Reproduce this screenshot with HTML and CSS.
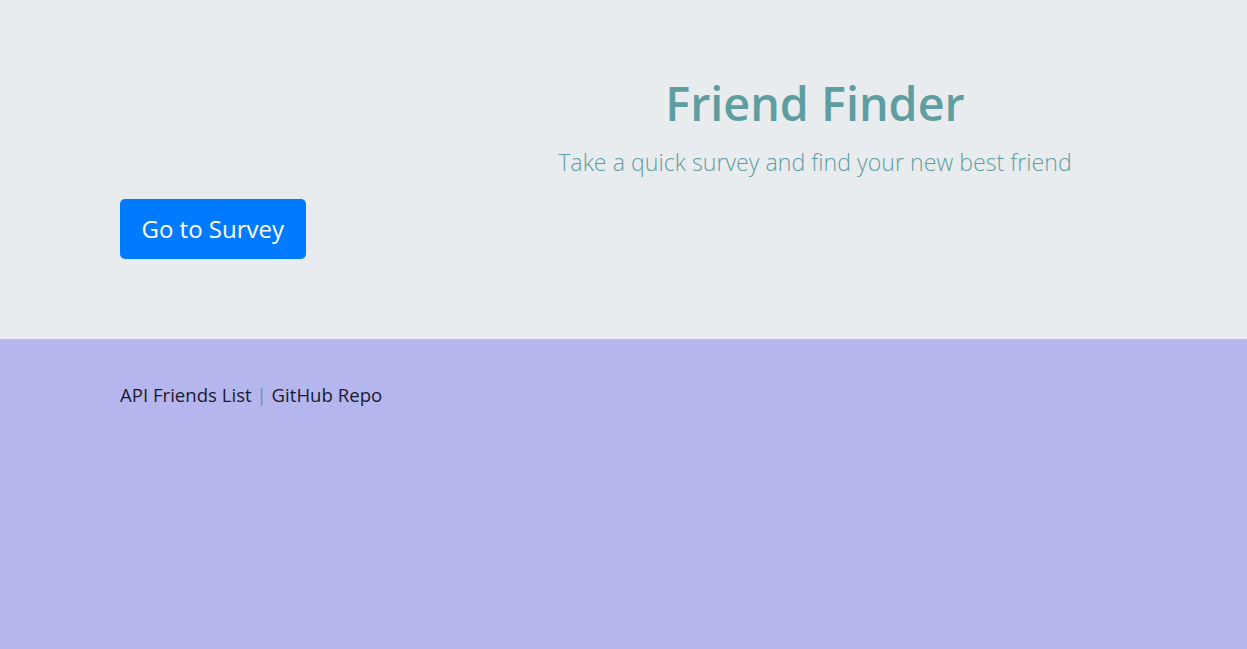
FILE: index.html
```html
<!DOCTYPE html>
<html>
<head>
<meta charset="utf-8">
<link rel="stylesheet" href="styles.css">
</head>
<body>
<header class="jumbotron">
  <div class="hero">
    <h1 class="title">Friend Finder</h1>
    <p class="lead">Take a quick survey and find your new best friend</p>
  </div>
  <a class="btn" href="#">Go to Survey</a>
</header>
<footer class="footer">
  <a href="#" class="link">API Friends List</a> <span class="sep">|</span> <a href="#" class="link">GitHub Repo</a>
</footer>
</body>
</html>
```
FILE: styles.css
```css
html, body {
  margin: 0;
  padding: 0;
  height: 100%;
}
body {
  font-family: "Open Sans", "Noto Sans", sans-serif;
  background: #b6b6ef;
  color: #212529;
}
.jumbotron {
  background: #e9ecef;
  height: 339px;
  box-sizing: border-box;
  padding: 70px 0 0 120px;
  display: flex;
  flex-direction: column;
}
.hero {
  width: 800px;
  margin-left: 295px;
  text-align: center;
  color: #5f9ea0;
}
.title {
  margin: 0;
  font-size: 46.7px;
  font-weight: 600;
  line-height: 66px;
}
.lead {
  margin: 10px 0 0;
  font-size: 23.2px;
  font-weight: 300;
  line-height: 32px;
}
.btn {
  align-self: flex-start;
  margin-top: 21px;
  background: #007bff;
  color: #fff;
  text-decoration: none;
  font-size: 24px;
  line-height: 36px;
  padding: 12px 21.5px;
  border-radius: 5px;
}
.footer {
  padding: 41px 0 0 120px;
  font-size: 18.6px;
  line-height: 30px;
}
.link {
  color: #1a1a30;
  text-decoration: none;
}
.sep {
  color: #7a8aa0;
}
```
